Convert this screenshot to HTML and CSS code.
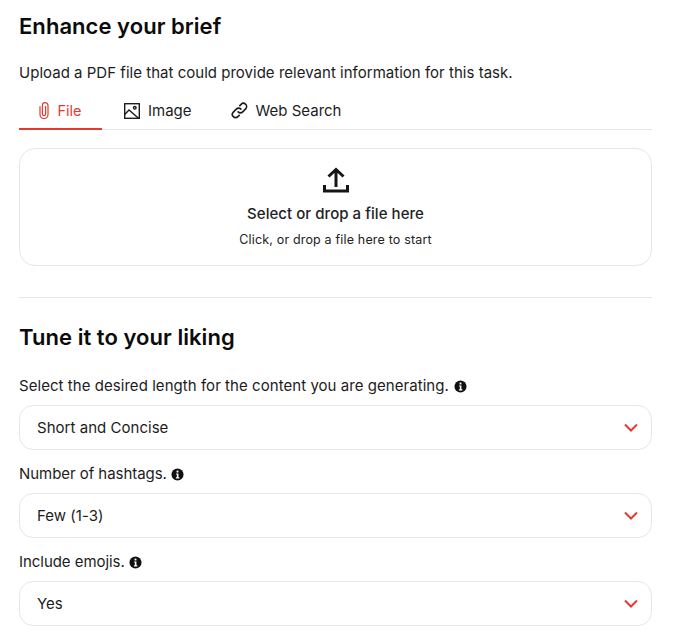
FILE: index.html
```html
<!DOCTYPE html>
<html lang="en">
<head>
<meta charset="utf-8">
<title>Enhance your brief</title>
<link rel="stylesheet" href="styles.css">
</head>
<body>
<main class="page">
  <h2 class="title">Enhance your brief</h2>
  <p class="intro">Upload a PDF file that could provide relevant information for this task.</p>
  <nav class="tabs">
    <div class="tab tab-active">
      <svg class="tab-icon icon-clip" viewBox="0 0 10 17" fill="none" stroke="currentColor" stroke-width="1.2" stroke-linecap="round"><path d="M1 4.500v8a4 4 0 0 0 8 0V3.500a2.800 2.800 0 0 0-5.600 0V12a1.600 1.600 0 0 0 3.200 0V4.500"/></svg>
      <span class="file-label">File</span>
    </div>
    <div class="tab">
      <svg class="tab-icon" viewBox="0 0 16 16" fill="none" stroke="currentColor" stroke-width="1.400"><rect x="0.700" y="0.700" width="14.600" height="14.600"/><circle cx="10.800" cy="4.800" r="1.300"/><path d="M0.700 11.500 5 7l9.800 8.500"/></svg>
      <span>Image</span>
    </div>
    <div class="tab">
      <svg class="tab-icon icon-link" viewBox="0 0 16 16" fill="none" stroke="currentColor" stroke-width="1.500" stroke-linecap="round"><path d="M6.700 9.300a3 3 0 0 0 4.300 0l2.800-2.800a3 3 0 0 0-4.300-4.300L8.300 3.400"/><path d="M9.300 6.700a3 3 0 0 0-4.300 0L2.200 9.500a3 3 0 0 0 4.300 4.300l1.200-1.200"/></svg>
      <span>Web Search</span>
    </div>
  </nav>
  <section class="drop">
    <svg class="drop-icon" viewBox="0 0 26 26" fill="none" stroke="#161616" stroke-width="3"><path d="M13 20V3M5.500 9.500 13 2.500l7.500 7"/><path d="M1.500 18v6h23v-6"/></svg>
    <div class="drop-title">Select or drop a file here</div>
    <div class="drop-sub">Click, or drop a file here to start</div>
  </section>
  <hr class="rule">
  <h2 class="title title-two">Tune it to your liking</h2>
  <div class="field">
    <div class="label">Select the desired length for the content you are generating.
      <svg class="info" viewBox="0 0 14 14"><circle cx="7" cy="7" r="6.500" fill="#111"/><rect x="6" y="2.800" width="2" height="2" fill="#fff"/><path d="M5.500 6h2.500v4h1v1.200H5.300V10h1V7.100h-.8z" fill="#fff"/></svg>
    </div>
    <div class="select"><span>Short and Concise</span><svg class="chev" viewBox="0 0 14 9" fill="none" stroke="#e5392f" stroke-width="2"><path d="M1 1.500l6 6 6-6"/></svg></div>
  </div>
  <div class="field">
    <div class="label label-short">Number of hashtags.
      <svg class="info" viewBox="0 0 14 14"><circle cx="7" cy="7" r="6.500" fill="#111"/><rect x="6" y="2.800" width="2" height="2" fill="#fff"/><path d="M5.500 6h2.500v4h1v1.200H5.300V10h1V7.100h-.8z" fill="#fff"/></svg>
    </div>
    <div class="select"><span>Few (1-3)</span><svg class="chev" viewBox="0 0 14 9" fill="none" stroke="#e5392f" stroke-width="2"><path d="M1 1.500l6 6 6-6"/></svg></div>
  </div>
  <div class="field">
    <div class="label label-short">Include emojis.
      <svg class="info" viewBox="0 0 14 14"><circle cx="7" cy="7" r="6.500" fill="#111"/><rect x="6" y="2.800" width="2" height="2" fill="#fff"/><path d="M5.500 6h2.500v4h1v1.200H5.300V10h1V7.100h-.8z" fill="#fff"/></svg>
    </div>
    <div class="select"><span>Yes</span><svg class="chev" viewBox="0 0 14 9" fill="none" stroke="#e5392f" stroke-width="2"><path d="M1 1.500l6 6 6-6"/></svg></div>
  </div>
</main>
</body>
</html>
```
FILE: styles.css
```css
* { box-sizing: border-box; }
html, body { margin: 0; padding: 0; background: #fff; }
body { font-family: "Inter", "Liberation Sans", sans-serif; color: #111; overflow: hidden; }
.page { width: 652px; padding: 12px 0 0 19px; }
.title { margin: 0; font-size: 22px; line-height: 28px; font-weight: 600; color: #0b0b0b; letter-spacing: 0.05px; }
.intro { margin: 22px 0 0; font-size: 15px; line-height: 22px; letter-spacing: 0.02px; color: #1c1c1c; }
.tabs { display: flex; margin-top: 9px; height: 37px; border-bottom: 1px solid #e6e6e6; }
.tab { display: flex; align-items: center; gap: 8px; height: 37px; font-size: 15px; padding: 0 39px 2px 0; color: #1c1c1c; }
.tab-active { width: 83px; justify-content: center; padding: 0; margin-right: 22px; color: #e5392f; border-bottom: 2px solid #e5392f; }
.tab-icon { width: 16px; height: 16px; flex: none; }
.tab-icon.icon-clip { width: 10px; height: 17px; }
.tab-icon.icon-link { width: 17px; height: 17px; }
.file-label { font-size: 14.500px; }
.drop { margin-top: 18px; height: 118px; border: 1px solid #e6e6e6; border-radius: 16px; display: flex; flex-direction: column; align-items: center; padding-top: 18px; }
.drop-icon { width: 26px; height: 26px; }
.drop-title { margin-top: 10px; font-size: 15px; line-height: 22px; font-weight: 500; color: #222; letter-spacing: 0.05px; }
.drop-sub { margin-top: 6px; font-size: 12.500px; line-height: 18px; color: #222; letter-spacing: 0.17px; }
.rule { margin: 31px 0 0; border: 0; border-top: 1px solid #e6e6e6; }
.title-two { margin-top: 25px; }
.field { margin-top: 13px; }
.title-two + .field { margin-top: 24px; }
.label { display: flex; align-items: center; gap: 5px; font-size: 15px; line-height: 22px; color: #1c1c1c; letter-spacing: 0.05px; }
.label-short { letter-spacing: -0.05px; gap: 4px; }
.info { width: 13px; height: 13px; flex: none; }
.select { margin-top: 8px; height: 45px; border: 1px solid #e6e6e6; border-radius: 14px; display: flex; align-items: center; justify-content: space-between; padding: 0 13px 0 17px; font-size: 15px; letter-spacing: 0.03px; color: #1c1c1c; }
.chev { width: 14px; height: 9px; }
```
